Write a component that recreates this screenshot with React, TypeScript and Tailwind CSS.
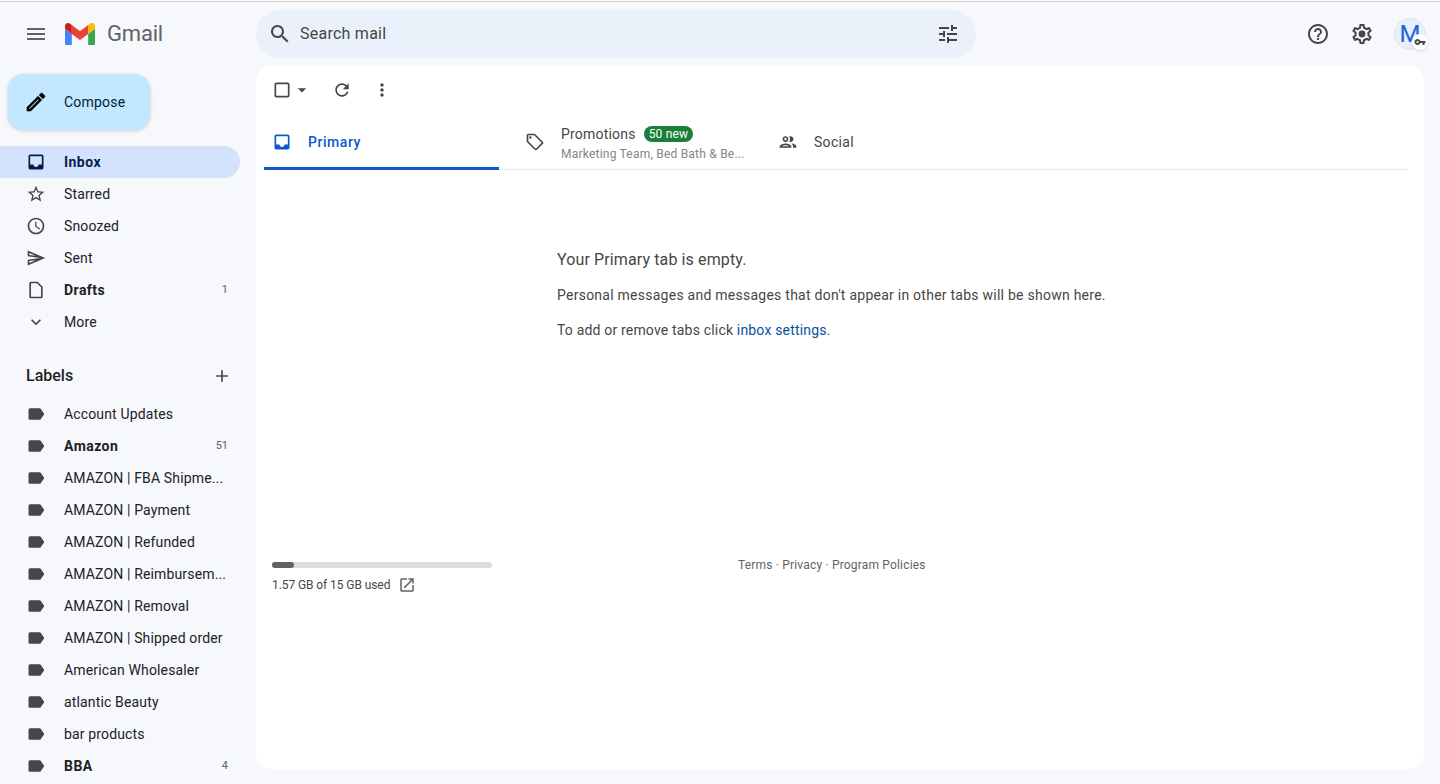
import type { ReactNode } from 'react'

const font = { fontFamily: 'Roboto, "Noto Sans", sans-serif' }

const P = {
  menu: 'M3 18h18v-2H3v2zm0-5h18v-2H3v2zm0-7v2h18V6H3z',
  search: 'M15.5 14h-.79l-.28-.27C15.41 12.59 16 11.11 16 9.5 16 5.91 13.09 3 9.5 3S3 5.91 3 9.5 5.91 16 9.5 16c1.61 0 3.09-.59 4.23-1.57l.27.28v.79l5 4.99L20.49 19l-4.99-5zm-6 0C7.01 14 5 11.99 5 9.5S7.01 5 9.5 5 14 7.01 14 9.5 11.99 14 9.5 14z',
  tune: 'M3 17v2h6v-2H3zM3 5v2h10V5H3zm10 16v-2h8v-2h-8v-2h-2v6h2zM7 9v2H3v2h4v2h2V9H7zm14 4v-2H11v2h10zm-6-4h2V7h4V5h-4V3h-2v6z',
  help: 'M11 18h2v-2h-2v2zm1-16C6.48 2 2 6.48 2 12s4.48 10 10 10 10-4.48 10-10S17.52 2 12 2zm0 18c-4.41 0-8-3.59-8-8s3.59-8 8-8 8 3.59 8 8-3.59 8-8 8zm0-14c-2.21 0-4 1.79-4 4h2c0-1.1.9-2 2-2s2 .9 2 2c0 2-3 1.75-3 5h2c0-2.25 3-2.5 3-5 0-2.21-1.79-4-4-4z',
  settings: 'M19.43 12.98c.04-.32.07-.64.07-.98 0-.34-.03-.66-.07-.98l2.11-1.65c.19-.15.24-.42.12-.64l-2-3.46c-.09-.16-.26-.25-.44-.25-.06 0-.12.01-.17.03l-2.49 1c-.52-.4-1.08-.73-1.69-.98l-.38-2.65C14.46 2.18 14.25 2 14 2h-4c-.25 0-.46.18-.49.42l-.38 2.65c-.61.25-1.17.59-1.69.98l-2.49-1c-.06-.02-.12-.03-.18-.03-.17 0-.34.09-.43.25l-2 3.46c-.13.22-.07.49.12.64l2.11 1.65c-.04.32-.07.65-.07.98 0 .33.03.66.07.98l-2.11 1.65c-.19.15-.24.42-.12.64l2 3.46c.09.16.26.25.44.25.06 0 .12-.01.17-.03l2.49-1c.52.4 1.08.73 1.69.98l.38 2.65c.03.24.24.42.49.42h4c.25 0 .46-.18.49-.42l.38-2.65c.61-.25 1.17-.59 1.69-.98l2.49 1c.06.02.12.03.18.03.17 0 .34-.09.43-.25l2-3.46c.12-.22.07-.49-.12-.64l-2.11-1.65zm-1.98-1.71c.04.31.05.52.05.73 0 .21-.02.43-.05.73l-.14 1.13.89.7 1.08.84-.7 1.21-1.27-.51-1.04-.42-.9.68c-.43.32-.84.56-1.25.73l-1.06.43-.16 1.13-.2 1.35h-1.4l-.19-1.35-.16-1.13-1.06-.43c-.43-.18-.83-.41-1.23-.71l-.91-.7-1.06.43-1.27.51-.7-1.21 1.08-.84.89-.7-.14-1.13c-.03-.31-.05-.54-.05-.74s.02-.43.05-.73l.14-1.13-.89-.7-1.08-.84.7-1.21 1.27.51 1.04.42.9-.68c.43-.32.84-.56 1.25-.73l1.06-.43.16-1.13.2-1.35h1.39l.19 1.35.16 1.13 1.06.43c.43.18.83.41 1.23.71l.91.7 1.06-.43 1.27-.51.7 1.21-1.07.85-.89.7.14 1.13zM12 8.6a3.4 3.4 0 1 0 0 6.8 3.4 3.4 0 0 0 0-6.8z',
  create: 'M3 17.25V21h3.75L17.81 9.94l-3.75-3.75L3 17.25zM5.92 19H5v-.92l9.06-9.06.92.92L5.92 19zM20.71 5.63l-2.34-2.34c-.2-.2-.45-.29-.71-.29s-.51.1-.7.29l-1.83 1.83 3.75 3.75 1.83-1.83c.39-.39.39-1.02 0-1.41z',
  inbox: 'M19 3H5c-1.1 0-2 .9-2 2v14c0 1.1.9 2 2 2h14c1.1 0 2-.9 2-2V5c0-1.1-.9-2-2-2zm0 12h-4c0 1.66-1.35 3-3 3s-3-1.34-3-3H5V5h14v10z',
  star: 'M22 9.24l-7.19-.62L12 2 9.19 8.63 2 9.24l5.46 4.73L5.82 21 12 17.27 18.18 21l-1.63-7.03L22 9.24zM12 15.4l-3.76 2.27 1-4.28-3.32-2.88 4.38-.38L12 6.1l1.71 4.04 4.38.38-3.32 2.88 1 4.28L12 15.4z',
  clock: 'M11.99 2C6.47 2 2 6.48 2 12s4.47 10 9.99 10C17.52 22 22 17.52 22 12S17.52 2 11.99 2zM12 20c-4.42 0-8-3.58-8-8s3.58-8 8-8 8 3.58 8 8-3.58 8-8 8zM12.5 7H11v6l5.25 3.15.75-1.23-4.5-2.67z',
  send: 'M4.01 6.03l7.51 3.22-7.52-1 .01-2.22m7.5 8.72L4 17.97v-2.22l7.51-1M2.01 3L2 10l15 2-15 2 .01 7L23 12 2.01 3z',
  draft: 'M6 2c-1.1 0-2 .9-2 2v16c0 1.1.9 2 2 2h12c1.1 0 2-.9 2-2V8l-6-6H6zm0 18V4h7.17L18 8.83V20H6z',
  more: 'M16.59 8.59L12 13.17 7.41 8.59 6 10l6 6 6-6z',
  add: 'M19 13h-6v6h-2v-6H5v-2h6V5h2v6h6v2z',
  label: 'M17.63 5.84C17.27 5.33 16.67 5 16 5L5 5.01C3.9 5.01 3 5.9 3 7v10c0 1.1.9 1.99 2 1.99L16 19c.67 0 1.27-.33 1.63-.84L22 12l-4.37-6.16z',
  checkbox: 'M19 5v14H5V5h14m0-2H5c-1.1 0-2 .9-2 2v14c0 1.1.9 2 2 2h14c1.1 0 2-.9 2-2V5c0-1.1-.9-2-2-2z',
  caret: 'M7 10l5 5 5-5z',
  refresh: 'M17.65 6.35C16.2 4.9 14.21 4 12 4c-4.42 0-7.99 3.58-7.99 8s3.57 8 7.99 8c3.73 0 6.84-2.55 7.73-6h-2.08c-.82 2.33-3.04 4-5.65 4-3.31 0-6-2.69-6-6s2.69-6 6-6c1.66 0 3.14.69 4.22 1.78L13 11h7V4l-2.35 2.35z',
  vert: 'M12 8c1.1 0 2-.9 2-2s-.9-2-2-2-2 .9-2 2 .9 2 2 2zm0 2c-1.1 0-2 .9-2 2s.9 2 2 2 2-.9 2-2-.9-2-2-2zm0 6c-1.1 0-2 .9-2 2s.9 2 2 2 2-.9 2-2-.9-2-2-2z',
  tag: 'M21.41 11.58l-9-9C12.05 2.22 11.55 2 11 2H4c-1.1 0-2 .9-2 2v7c0 .55.22 1.05.59 1.42l9 9c.36.36.86.58 1.41.58s1.05-.22 1.41-.59l7-7c.37-.36.59-.86.59-1.41s-.23-1.06-.59-1.42zM13 20.01L4 11V4h7v-.01l9 8.99-7 7.02zM6.5 5A1.5 1.5 0 1 0 6.5 8 1.5 1.5 0 0 0 6.5 5z',
  people: 'M9 13.75c-2.34 0-7 1.17-7 3.5V19h14v-1.75c0-2.33-4.66-3.5-7-3.5zM4.34 17c.84-.58 2.87-1.25 4.66-1.25s3.82.67 4.66 1.25H4.34zM9 12c1.93 0 3.5-1.57 3.5-3.5S10.93 5 9 5 5.5 6.57 5.5 8.5 7.07 12 9 12zm0-5c.83 0 1.5.67 1.5 1.5S9.83 10 9 10s-1.5-.67-1.5-1.5S8.17 7 9 7zm7.04 6.81c1.16.84 1.96 1.96 1.96 3.44V19h4v-1.75c0-2.02-3.5-3.17-5.96-3.44zM15 12c1.93 0 3.5-1.57 3.5-3.5S16.93 5 15 5c-.54 0-1.04.13-1.5.35.63.89 1 1.98 1 3.15s-.37 2.26-1 3.15c.46.22.96.35 1.5.35z',
  open: 'M19 19H5V5h7V3H5c-1.11 0-2 .9-2 2v14c0 1.1.89 2 2 2h14c1.1 0 2-.9 2-2v-7h-2v7zM14 3v2h3.59l-9.83 9.83 1.41 1.41L19 6.41V10h2V3h-7z',
  key: 'M12.65 10C11.83 7.67 9.61 6 7 6c-3.31 0-6 2.69-6 6s2.69 6 6 6c2.61 0 4.83-1.67 5.65-4H17v4h4v-4h2v-4H12.65zM7 14c-1.1 0-2-.9-2-2s.9-2 2-2 2 .9 2 2-.9 2-2 2z',
}

function Icon({ d, className }: { d: string; className?: string }) {
  return (
    <svg viewBox="0 0 24 24" fill="currentColor" className={className}>
      <path d={d} />
    </svg>
  )
}

function GmailLogo() {
  return (
    <svg viewBox="52 42 88 66" className="w-[30px] h-[22.5px] shrink-0">
      <path fill="#4285f4" d="M58 108h14V74L52 59v43c0 3.32 2.69 6 6 6" />
      <path fill="#34a853" d="M120 108h14c3.32 0 6-2.69 6-6V59l-20 15" />
      <path fill="#fbbc04" d="M120 48v26l20-15v-8c0-7.42-8.47-11.65-14.4-7.2" />
      <path fill="#ea4335" d="M72 74V48l24 18 24-18v26L96 92" />
      <path fill="#c5221f" d="M52 51v8l20 15V48l-5.6-4.2c-5.94-4.45-14.4-.22-14.4 7.2" />
    </svg>
  )
}

const navItems = [
  { icon: P.star, name: 'Starred' },
  { icon: P.clock, name: 'Snoozed' },
  { icon: P.send, name: 'Sent' },
  { icon: P.draft, name: 'Drafts', bold: true, count: '1' },
  { icon: P.more, name: 'More' },
]

const labels = [
  { name: 'Account Updates' },
  { name: 'Amazon', bold: true, count: '51' },
  { name: 'AMAZON | FBA Shipme...' },
  { name: 'AMAZON | Payment' },
  { name: 'AMAZON | Refunded' },
  { name: 'AMAZON | Reimbursem...' },
  { name: 'AMAZON | Removal' },
  { name: 'AMAZON | Shipped order' },
  { name: 'American Wholesaler' },
  { name: 'atlantic Beauty' },
  { name: 'bar products' },
  { name: 'BBA', bold: true, count: '4' },
]

function SideRow({ icon, name, bold, count }: { icon: string; name: string; bold?: boolean; count?: string }) {
  return (
    <div className="h-8 w-[240px] flex items-center pl-[26px] pr-3 shrink-0">
      <Icon d={icon} className="w-5 h-5 text-[#444746] shrink-0" />
      <span className={`ml-[18px] flex-1 whitespace-nowrap text-[14px] text-[#202124] ${bold ? 'font-bold tracking-[0.45px]' : 'tracking-[0.15px]'}`}>{name}</span>
      {count && <span className="text-[11px] text-[#5f6368] pt-[1px]">{count}</span>}
    </div>
  )
}

function Tab({ className, children }: { className: string; children: ReactNode }) {
  return <div className={`h-[56px] flex items-center shrink-0 ${className}`}>{children}</div>
}

export default function App() {
  return (
    <div className="h-[784px] w-[1440px] overflow-hidden bg-[#f6f8fc] flex flex-col" style={font}>
      <div className="h-[2px] bg-white border-b border-[#cfcfcf] shrink-0" />

      {/* Header */}
      <header className="h-[64px] shrink-0 flex items-center">
        <div className="w-[256px] flex items-center pl-6 shrink-0">
          <Icon d={P.menu} className="w-6 h-6 text-[#5f6368]" />
          <div className="ml-[17px]"><GmailLogo /></div>
          <span className="ml-[12px] text-[22px] text-[#5f6368] leading-none tracking-[-0.2px]">Gmail</span>
        </div>
        <div className="w-[720px] h-12 rounded-full bg-[#eaf1fb] flex items-center pl-3 pr-4">
          <Icon d={P.search} className="w-6 h-6 text-[#444746]" />
          <span className="ml-2 flex-1 text-[16px] text-[#444746] tracking-[0.25px] pb-[1px]">Search mail</span>
          <Icon d={P.tune} className="w-6 h-6 text-[#444746]" />
        </div>
        <div className="flex-1 flex items-center justify-end pr-[14px]">
          <Icon d={P.help} className="w-6 h-6 text-[#444746]" />
          <Icon d={P.settings} className="w-6 h-6 text-[#444746] ml-5" />
          <div className="relative ml-5 w-8 h-8 rounded-full bg-[#e8f0fb] border border-[#dde5f2] flex items-center justify-center text-[24px] text-[#1a66d6]">
            M
            <span className="absolute -right-[3px] -bottom-[1px] w-4 h-4 rounded-full bg-white shadow flex items-center justify-center">
              <Icon d={P.key} className="w-3 h-3 text-[#444746]" />
            </span>
          </div>
        </div>
      </header>

      <div className="flex-1 flex min-h-0">
        {/* Sidebar */}
        <aside className="w-[256px] shrink-0 flex flex-col">
          <div className="ml-2 mt-2 w-[142px] h-14 shrink-0 rounded-2xl bg-[#c2e7ff] shadow-[0_1px_3px_1px_rgba(60,64,67,0.15)] flex items-center pl-4">
            <svg viewBox="0 0 24 24" fill="#000" stroke="#000" strokeWidth="0.6" className="w-6 h-6">
              <path d={P.create} />
            </svg>
            <span className="ml-[16px] text-[14px] text-[#001d35] tracking-[0.2px]">Compose</span>
          </div>
          <div className="mt-4 h-8 w-[240px] shrink-0 rounded-r-full bg-[#d3e3fd] flex items-center pl-[26px]">
            <Icon d={P.inbox} className="w-5 h-5 text-[#041e49]" />
            <span className="ml-[18px] text-[14px] font-bold text-[#041e49] tracking-[0.45px]">Inbox</span>
          </div>
          {navItems.map((item) => (
            <SideRow key={item.name} {...item} />
          ))}
          <div className="mt-[22px] h-8 w-[240px] shrink-0 flex items-center justify-between pl-[26px] pr-2">
            <span className="text-[16px] font-medium text-[#1f1f1f]">Labels</span>
            <Icon d={P.add} className="w-5 h-5 text-[#444746]" />
          </div>
          <div className="mt-[6px] flex flex-col">
            {labels.map((l) => (
              <SideRow key={l.name} icon={P.label} {...l} />
            ))}
          </div>
        </aside>

        {/* Main card */}
        <main className="w-[1168px] h-[703px] rounded-2xl bg-white flex flex-col shrink-0">
          <div className="h-12 shrink-0 flex items-center pl-4">
            <Icon d={P.checkbox} className="w-5 h-5 text-[#444746]" />
            <Icon d={P.caret} className="w-5 h-5 text-[#444746]" />
            <Icon d={P.refresh} className="w-5 h-5 text-[#444746] ml-5" />
            <Icon d={P.vert} className="w-5 h-5 text-[#444746] ml-5" />
          </div>

          <div className="ml-2 mr-4 h-[56px] shrink-0 flex border-b border-[#e8eaed]">
            <Tab className="w-[235px] pl-2 relative">
              <Icon d={P.inbox} className="w-5 h-5 text-[#0b57d0]" />
              <span className="ml-4 text-[14px] font-medium text-[#0b57d0] tracking-[0.55px]">Primary</span>
              <span className="absolute left-0 right-0 bottom-0 h-[3px] bg-[#0b57d0]" />
            </Tab>
            <Tab className="w-[265px] pl-6">
              <Icon d={P.tag} className="w-5 h-5 mx-[2px] text-[#444746]" />
              <div className="ml-[14px] pt-1">
                <div className="flex items-center h-[18px]">
                  <span className="text-[14px] text-[#444746] tracking-[0.2px]">Promotions</span>
                  <span className="ml-2 h-[16px] px-[5px] rounded-full bg-[#188038] text-white text-[12px] leading-[16px] tracking-[0.2px]">50 new</span>
                </div>
                <div className="mt-[2px] text-[12px] leading-[18px] text-[#80868b] tracking-[0.22px] whitespace-nowrap">Marketing Team, Bed Bath &amp; Be...</div>
              </div>
            </Tab>
            <Tab className="pl-3">
              <Icon d={P.people} className="w-5 h-5 mx-[2px] text-[#444746]" />
              <span className="ml-[14px] text-[14px] text-[#444746] tracking-[0.3px]">Social</span>
            </Tab>
          </div>

          <div className="ml-[301px] mt-[80px] shrink-0">
            <p className="text-[16px] leading-5 text-[#444746] tracking-[0.12px]">Your Primary tab is empty.</p>
            <p className="mt-[15px] text-[14px] leading-5 text-[#444746] tracking-[0.25px]">Personal messages and messages that don't appear in other tabs will be shown here.</p>
            <p className="mt-[15px] text-[14px] leading-5 text-[#444746] tracking-[0.18px]">
              To add or remove tabs click <span className="text-[#0b4f9e]">inbox settings</span>.
            </p>
          </div>

          <div className="mt-[220px] flex items-start pl-4">
            <div className="w-[220px]">
              <div className="h-[6px] mt-[2px] rounded-full bg-[#dadce0]">
                <div className="h-[6px] w-[22px] rounded-full bg-[#5f6368]" />
              </div>
              <div className="mt-[8px] flex items-center">
                <span className="text-[12px] text-[#444746] tracking-[-0.08px]">1.57 GB of 15 GB used</span>
                <Icon d={P.open} className="w-[18px] h-[18px] ml-2 text-[#5f6368]" />
              </div>
            </div>
            <div className="ml-[246px] -mt-[3px] text-[12px] leading-4 text-[#5f6368] tracking-[0.18px]">Terms · Privacy · Program Policies</div>
          </div>
        </main>
      </div>
    </div>
  )
}
